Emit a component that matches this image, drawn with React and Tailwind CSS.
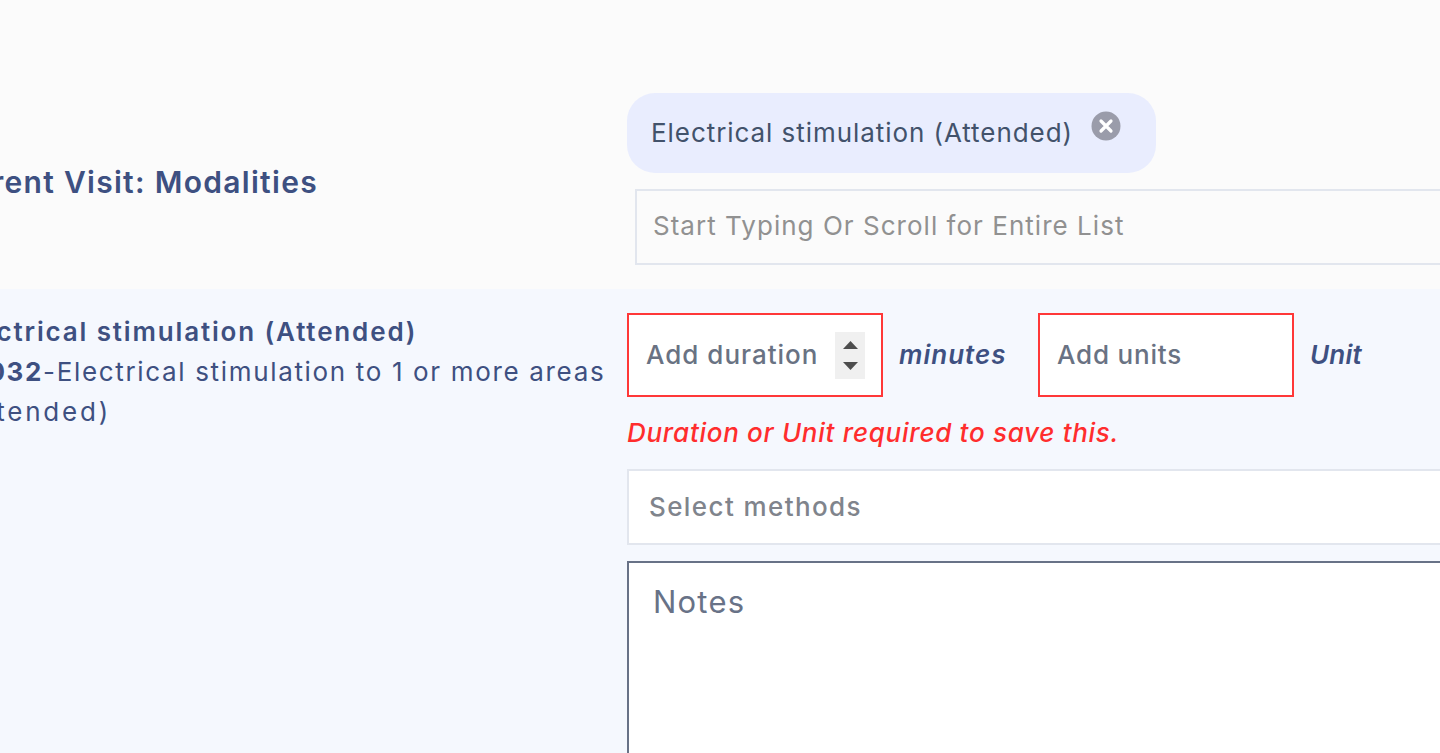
function Stepper() {
  return (
    <div className="ml-auto flex h-[47px] w-[30px] flex-col items-center justify-center gap-[13px] bg-[#f0f0f0]">
      <svg width="15" height="8" viewBox="0 0 15 8"><path d="M7.5 0L15 8H0Z" fill="#4d4d4d" /></svg>
      <svg width="15" height="8" viewBox="0 0 15 8"><path d="M0 0H15L7.5 8Z" fill="#4d4d4d" /></svg>
    </div>
  );
}
export default function App() {
  return (
    <div className="h-[753px] w-[1440px] overflow-hidden bg-[#f5f8fe] font-['Inter','Liberation_Sans',sans-serif]">
      <div className="flex h-[289px] bg-[#fbfbfb]">
        <div className="flex w-[627px] shrink-0 items-center overflow-hidden pt-[75px]">
          <div className="flex w-[318px] justify-end">
            <div className="shrink-0 whitespace-nowrap text-[30px] font-semibold tracking-[1.3px] text-[#3e5081]">Current Visit: Modalities</div>
          </div>
        </div>
        <div className="min-w-0 flex-1 pt-[93px]">
          <div className="flex h-[80px] w-[529px] items-center rounded-[28px] bg-[#e9edfe] pb-[2px] pl-[24px]">
            <span className="whitespace-nowrap text-[26px] tracking-[0.94px] text-[#42526b]">Electrical stimulation (Attended)</span>
            <svg className="mb-[13px] ml-[18px]" width="30" height="30" viewBox="0 0 30 30">
              <circle cx="15" cy="15" r="14.5" fill="#9a9caa" />
              <path d="M10 10L20 20M20 10L10 20" stroke="#fff" strokeWidth="3.2" strokeLinecap="round" />
            </svg>
          </div>
          <div className="ml-[8px] mt-[16px] flex h-[76px] w-[900px] items-center border-2 border-[#e2e6ee] pb-[4px] pl-[16px] text-[26px] tracking-[1.03px] text-[#919191]">Start Typing Or Scroll for Entire List</div>
        </div>
      </div>
      <div className="flex">
        <div className="w-[627px] shrink-0 overflow-hidden pt-[23px]">
          <div className="ml-[-47px] w-[660px] text-[26px] leading-[40px] text-[#3e5081]">
            <div className="font-semibold tracking-[1.85px]">Electrical stimulation (Attended)</div>
            <div className="tracking-[1.66px]"><span className="font-bold">97032</span>-Electrical stimulation to 1 or more areas <span className="tracking-[2.8px]">(Attended)</span></div>
          </div>
        </div>
        <div className="min-w-0 flex-1 pt-[24px]">
          <div className="flex items-center">
            <div className="flex h-[84px] w-[256px] items-center border-2 border-[#ff3838] bg-white pl-[17px] pr-[16px] text-[26px] font-medium tracking-[1px] text-[#697283]">
              <span className="mb-[2px] whitespace-nowrap">Add duration</span>
              <Stepper />
            </div>
            <span className="mb-[2px] ml-[16px] w-[139px] text-[26px] font-semibold italic tracking-[1px] text-[#3e5081]">minutes</span>
            <div className="flex h-[84px] w-[256px] items-center border-2 border-[#ff3838] bg-white pb-[2px] pl-[17px] text-[26px] font-medium tracking-[0.8px] text-[#697283]">Add units</div>
            <span className="mb-[2px] ml-[16px] text-[26px] font-semibold italic tracking-[0.2px] text-[#3e5081]">Unit</span>
          </div>
          <div className="mt-[16px] text-[26px] font-medium italic leading-[40px] tracking-[0.7px] text-[#ff2d2d]">Duration or Unit required to save this.</div>
          <div className="mt-[16px] flex h-[76px] w-[900px] items-center border-2 border-[#e2e6ee] bg-white pb-[2px] pl-[20px] text-[26px] font-medium tracking-[1.4px] text-[#80848c]">Select methods</div>
          <div className="mt-[16px] h-[300px] w-[900px] border-2 border-[#687287] bg-white pl-[24px] pt-[16px] text-[31px] tracking-[1.2px] text-[#687287]">Notes</div>
        </div>
      </div>
    </div>
  );
}
